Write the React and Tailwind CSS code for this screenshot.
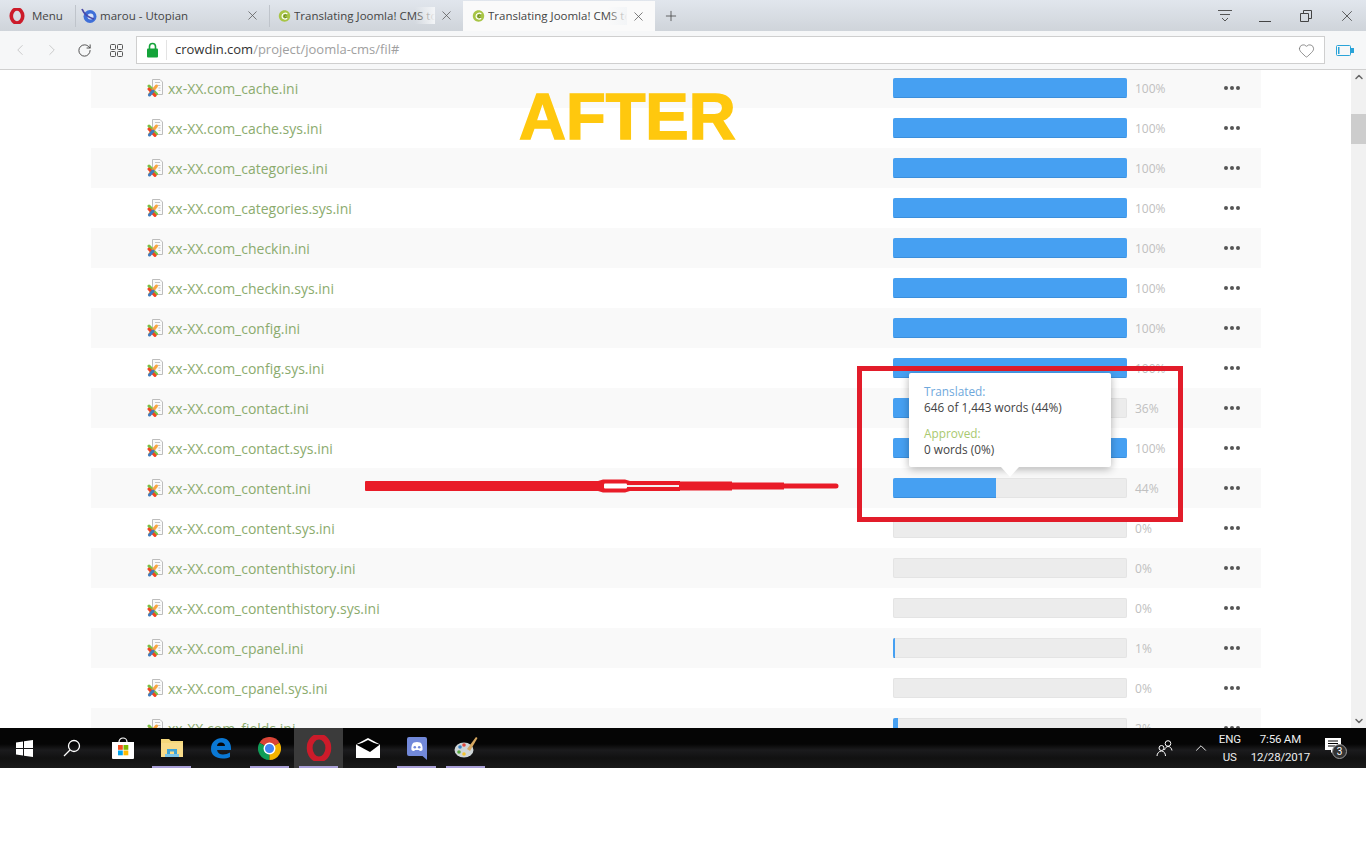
import React from 'react';
import { ChevronDown, ChevronLeft, ChevronRight, ChevronUp, Heart, Plus, RotateCw, X } from 'lucide-react';

const files = [
  ['xx-XX.com_cache.ini', 100],
  ['xx-XX.com_cache.sys.ini', 100],
  ['xx-XX.com_categories.ini', 100],
  ['xx-XX.com_categories.sys.ini', 100],
  ['xx-XX.com_checkin.ini', 100],
  ['xx-XX.com_checkin.sys.ini', 100],
  ['xx-XX.com_config.ini', 100],
  ['xx-XX.com_config.sys.ini', 100],
  ['xx-XX.com_contact.ini', 36],
  ['xx-XX.com_contact.sys.ini', 100],
  ['xx-XX.com_content.ini', 44],
  ['xx-XX.com_content.sys.ini', 0],
  ['xx-XX.com_contenthistory.ini', 0],
  ['xx-XX.com_contenthistory.sys.ini', 0],
  ['xx-XX.com_cpanel.ini', 1],
  ['xx-XX.com_cpanel.sys.ini', 0],
  ['xx-XX.com_fields.ini', 2],
];

function OperaLogo({ size = 16 }) {
  return (
    <svg width={size} height={size} viewBox="0 0 24 24">
      <ellipse cx="12" cy="12" rx="8.6" ry="10.5" fill="none" stroke="#cc1b2a" strokeWidth="5.4" />
    </svg>
  );
}

function CrowdinLogo() {
  return (
    <svg width="13" height="14" viewBox="0 0 16 16" className="shrink-0">
      <path d="M8 1c4 0 7 3 7 7s-3 7-7 7-7-3-7-7 3-7 7-7z" fill="#a8c545" />
      <path d="M11.5 5.5C9 3.5 5 5 5 8.2s3.6 4.6 6.3 2.6" fill="none" stroke="#fff" strokeWidth="1.5" />
      <path d="M10.5 7C9 6.2 7.4 7 7.4 8.3s1.800 2 3.100 1.200" fill="none" stroke="#4d6b1d" strokeWidth="1.100" />
    </svg>
  );
}

function JoomlaFile() {
  return (
    <svg width="16" height="18" viewBox="0 0 16 18" className="shrink-0">
      <path d="M5.500 0.500H13L15.500 3V15.500H5.500Z" fill="#fafafa" stroke="#bdbdbd" />
      <path d="M8 3.500h5M11 6.500h2.500M11.500 9h2M11.500 11.500h2" stroke="#c4c4c4" />
      <path d="M2 7L9.500 15" stroke="#7ac143" strokeWidth="3" strokeLinecap="round" />
      <path d="M9.500 7L2.500 15.500" stroke="#f9a541" strokeWidth="3" strokeLinecap="round" />
      <path d="M2 10L8 16.500" stroke="#f44321" strokeWidth="3" strokeLinecap="round" />
      <path d="M6 12L2.500 16" stroke="#3f7cc0" strokeWidth="3" strokeLinecap="round" />
    </svg>
  );
}

function Tab({ icon, title, active, fade, width, padding }) {
  return (
    <div className={`flex h-[30px] items-center pr-[9px] ${padding} ${width} ${active ? 'bg-[#fafafa] self-end' : ''}`}>
      {icon}
      <div className="relative ml-[3px] flex-1 overflow-hidden whitespace-nowrap text-[11.5px] text-[#444]">
        {title}
        {fade && <div className="absolute right-0 top-0 h-full w-5 bg-gradient-to-r from-transparent to-[#f3f5f7]" />}
      </div>
      <X size={15} strokeWidth={1.200} className="ml-1 shrink-0 text-[#555]" />
    </div>
  );
}

function BrowserChrome() {
  return (
    <div className="shrink-0 font-['Open_Sans',sans-serif]">
      <div className="flex h-[31px] items-center bg-gradient-to-b from-[#e1e6ed] to-[#cfd4da]">
        <div className="flex w-[75px] items-center gap-[7px] pl-[9px] text-[11.5px] text-[#444]">
          <OperaLogo />
          Menu
        </div>
        <div className="h-[22px] w-px bg-[#bfc4cb]" />
        <Tab
          width="w-[193px]"
          padding="pl-[5px]"
          icon={
            <svg width="16" height="15" viewBox="0 0 16 15" className="shrink-0">
              <circle cx="9" cy="8.500" r="6.500" fill="#3f6fd8" />
              <circle cx="9.500" cy="8.500" r="3" fill="#d9e4fa" />
              <path d="M1 1c2 5 5 8 12 10" fill="none" stroke="#4a4aa8" strokeWidth="1.800" />
            </svg>
          }
          title="marou - Utopian"
        />
        <div className="h-[22px] w-px bg-[#bfc4cb]" />
        <Tab width="w-[193px]" padding="pl-[8px]" icon={<CrowdinLogo />} title="Translating Joomla! CMS to Arabic" fade />
        <Tab width="w-[192px]" padding="pl-[9px]" icon={<CrowdinLogo />} title="Translating Joomla! CMS to Arabic" fade active />
        <Plus size={16} strokeWidth={1.200} className="ml-2 text-[#444]" />
        <div className="ml-auto flex items-center text-[#555]">
          <svg width="16" height="14" viewBox="0 0 16 14" className="mr-[25px]" fill="none" stroke="#555">
            <path d="M1 1.500h14M3 5.500h10M5 9l3 3 3-3" />
          </svg>
          <svg width="14" height="14" viewBox="0 0 14 14" className="mr-[27px]" fill="none" stroke="#444">
            <path d="M1 12.500h12" />
          </svg>
          <svg width="14" height="14" viewBox="0 0 14 14" className="mr-[25px]" fill="none" stroke="#444">
            <path d="M1.500 4.500h8v8h-8zM4.500 4.500v-3h8v8h-3" />
          </svg>
          <X size={18} strokeWidth={1} className="mr-[10px] text-[#333]" />
        </div>
      </div>
      <div className="flex h-[39px] items-center border-b border-[#d0d0d0] bg-[#f6f7f8]">
        <ChevronLeft size={18} strokeWidth={1} className="ml-[11px] text-[#bbb]" />
        <ChevronRight size={18} strokeWidth={1} className="ml-[14px] text-[#bbb]" />
        <RotateCw size={15} strokeWidth={1.500} className="ml-[16px] text-[#444]" />
        <svg width="13" height="13" viewBox="0 0 13 13" className="ml-[18px]" fill="none" stroke="#555">
          <rect x="0.500" y="0.500" width="5" height="5" rx="1" />
          <rect x="7.500" y="0.500" width="5" height="5" rx="1" />
          <rect x="0.500" y="7.500" width="5" height="5" rx="1" />
          <rect x="7.500" y="7.500" width="5" height="5" rx="1" />
        </svg>
        <div className="ml-[13px] flex h-[28px] flex-1 items-center border border-[#cfcfcf] bg-white">
          <svg width="13" height="16" viewBox="0 0 13 16" className="ml-[9px]">
            <path d="M3.500 7V4.500a3 3 0 0 1 6 0V7" fill="none" stroke="#14a33a" strokeWidth="1.600" />
            <rect x="1" y="6.500" width="11" height="9" rx="1" fill="#14a33a" />
          </svg>
          <div className="ml-[7px] h-[20px] w-px bg-[#e3e3e3]" />
          <div className="ml-[8px] text-[13px] text-[#333]">
            crowdin.com<span className="text-[#a0a0a0]">/project/joomla-cms/fil#</span>
          </div>
          <Heart size={17} strokeWidth={1} className="ml-auto mr-[9px] text-[#666]" />
        </div>
        <svg width="18" height="11" viewBox="0 0 18 11" className="ml-[11px] mr-[12px]" fill="none">
          <rect x="0.500" y="0.500" width="14" height="10" rx="1" stroke="#2aa3d8" />
          <rect x="2" y="2" width="1.500" height="7" fill="#2aa3d8" />
          <rect x="15" y="3" width="3" height="5" fill="#2aa3d8" />
        </svg>
      </div>
    </div>
  );
}

function FileRow({ name, percent, shaded }) {
  return (
    <div className={`flex h-10 items-center ${shaded ? 'bg-[#f9f9f9]' : 'bg-white'}`}>
      <div className="ml-[56px] w-[746px] flex items-center gap-[5px] text-[14px] text-[#8bab6e]">
        <JoomlaFile />
        {name}
      </div>
      <div className="h-5 w-[234px] overflow-hidden rounded-[2px] bg-[#ececec] shadow-[inset_0_0_0_1px_#e4e4e4]">
        <div className="h-5 bg-[#46a0f2] shadow-[inset_0_-1px_0_#3c8fdc]" style={{ width: `${percent}%` }} />
      </div>
      <div className="ml-2 w-[88px] translate-y-px text-[12px] text-[#c0c0c0]">{percent}%</div>
      <div className="ml-px flex gap-[2px]">
        <span className="size-[4px] rounded-full bg-[#555]" />
        <span className="size-[4px] rounded-full bg-[#555]" />
        <span className="size-[4px] rounded-full bg-[#555]" />
      </div>
    </div>
  );
}

function Tooltip() {
  return (
    <div className="absolute left-[909px] top-[303px] h-[94px] w-[202px] rounded-[2px] bg-white px-[15px] pt-[10px] text-[11.8px] leading-[16px] text-[#444] shadow-[0_2px_8px_rgba(0,0,0,0.3)]">
      <div className="text-[#6fa8dc]">Translated:</div>
      <div>646 of 1,443 words (44%)</div>
      <div className="mt-[10px] text-[#a9c96f]">Approved:</div>
      <div>0 words (0%)</div>
      <div className="absolute left-[92px] top-[94px] h-0 w-0 border-x-[9px] border-t-[10px] border-x-transparent border-t-white" />
    </div>
  );
}

function RedMarks() {
  return (
    <>
      <div className="absolute left-[857px] top-[296px] h-[156px] w-[326px] border-[5px] border-[#e21c2a]" />
      <svg width="480" height="20" viewBox="0 0 480 20" className="absolute left-[362px] top-[406px]">
        <path d="M4 5H236L241 3.500H263L268 5H318V15H268L263 16.500H241L236 15H4a1 1 0 0 1-1-1V6a1 1 0 0 1 1-1z" fill="#e91c28" />
        <path d="M318 5.500H370V14.500H318zM370 6.500H422V13.500H370zM422 7.500H474a2.500 2.500 0 0 1 0 5H422z" fill="#e91c28" />
        <rect x="242" y="7.500" width="23" height="5" rx="1" fill="#fff" />
        <rect x="265" y="9" width="52" height="2" fill="#f2f2f2" />
      </svg>
    </>
  );
}

function Page() {
  return (
    <div className="relative flex min-h-0 flex-1 overflow-hidden bg-white font-['Open_Sans',sans-serif]">
      <div className="-mt-[2px] ml-[91px] w-[1170px]">
        {files.map(([name, percent], i) => (
          <FileRow key={name} name={name} percent={percent} shaded={i % 2 === 0} />
        ))}
      </div>
      <div className="absolute left-[519px] top-[5px] font-['Liberation_Sans',sans-serif] text-[65px] font-bold leading-[84px] text-[#ffc80e] [-webkit-text-stroke:1.5px_#ffc80e]">
        AFTER
      </div>
      <RedMarks />
      <Tooltip />
      <div className="ml-auto flex w-[15px] flex-col items-center justify-between bg-[#f1f1f1] py-[1px]">
        <ChevronUp size={12} strokeWidth={3} className="text-[#666]" />
        <ChevronDown size={12} strokeWidth={3} className="text-[#666]" />
      </div>
      <div className="absolute right-0 top-[44px] h-[30px] w-[15px] bg-[#cdcdcd]" />
    </div>
  );
}

function TaskIcon({ children, running, active }) {
  return (
    <div className={`relative flex h-10 w-[49px] items-center justify-center ${active ? 'bg-[#3b3b3b]' : ''}`}>
      {children}
      {running && <div className="absolute inset-x-[5px] bottom-0 h-[2px] bg-[#a9a0d8]" />}
    </div>
  );
}

function Taskbar() {
  return (
    <div className="flex h-10 shrink-0 items-center bg-[linear-gradient(#050505_0%,#050505_40%,#1b1b1d_55%,#111_75%,#1a1a1a_100%)] font-['Roboto',sans-serif] text-[11.5px] tracking-[-0.2px] text-[#eee]">
      <div className="flex w-[49px] justify-center">
        <svg width="17" height="17" viewBox="0 0 17 17" fill="#fff">
          <path d="M0 2.400L7 1.400V8H0zM8 1.300L17 0V8H8zM0 9H7V15.600L0 14.600zM8 9H17V17L8 15.700z" />
        </svg>
      </div>
      <div className="flex w-[49px] justify-center">
        <svg width="18" height="18" viewBox="0 0 18 18" fill="none" stroke="#fff" strokeWidth="1.300" className="-translate-x-[2px]">
          <circle cx="11" cy="7" r="5.500" />
          <path d="M7 11L1 17" />
        </svg>
      </div>
      <TaskIcon>
        <svg width="24" height="24" viewBox="0 0 24 24">
          <path d="M8 6a4 4 0 0 1 8 0" fill="none" stroke="#fff" strokeWidth="1.200" />
          <path d="M1 6H23V22a1 1 0 0 1-1 1H2a1 1 0 0 1-1-1z" fill="#fff" />
          <rect x="7" y="9" width="4.800" height="4.800" fill="#f25022" />
          <rect x="12.500" y="9" width="4.800" height="4.800" fill="#7fba00" />
          <rect x="7" y="14.500" width="4.800" height="4.800" fill="#00a4ef" />
          <rect x="12.500" y="14.500" width="4.800" height="4.800" fill="#ffb900" />
        </svg>
      </TaskIcon>
      <TaskIcon running>
        <svg width="22" height="20" viewBox="0 0 22 20">
          <path d="M0 1H8L10 3H22V19H0z" fill="#f4d77a" />
          <rect x="0" y="5" width="22" height="14" fill="#f8dc8a" />
          <path d="M6 16V11H16V16H13V13.500H9V16z" fill="#3da4d8" />
          <rect x="4" y="16" width="14" height="3" fill="#7cc4e6" />
        </svg>
      </TaskIcon>
      <TaskIcon>
        <svg width="22" height="22" viewBox="0 0 22 22">
          <path d="M1 12C1 5 6 1 12 1c5 0 9 4 9 10v2H7c.5 3 3 4.500 6 4.500 2.500 0 5-.8 7-2v4.500c-2 1-4.500 1.500-7.500 1.500C6 21.500 1 18 1 12zM7 9h8c0-2-1.500-3.500-4-3.500S7.300 7 7 9z" fill="#0a78d4" />
        </svg>
      </TaskIcon>
      <TaskIcon running>
        <svg width="23" height="23" viewBox="0 0 24 24">
          <path d="M12 12L22.400 6A12 12 0 0 0 1.600 6z" fill="#db4437" />
          <path d="M12 12L1.600 6A12 12 0 0 0 12 24z" fill="#0f9d58" />
          <path d="M12 12L12 24A12 12 0 0 0 22.400 6z" fill="#f4b400" />
          <circle cx="12" cy="12" r="5.500" fill="#4285f4" stroke="#fff" strokeWidth="1.500" />
        </svg>
      </TaskIcon>
      <TaskIcon running active>
        <OperaLogo size={26} />
      </TaskIcon>
      <TaskIcon>
        <svg width="24" height="20" viewBox="0 0 24 20">
          <path d="M0 6.500L12 0L24 6.500V20H0z" fill="#fff" />
          <path d="M0 6.500L14 14L24 6.500L12 4z" fill="#000" />
          <path d="M4 6L12 2L20 6L14 10z" fill="#000" />
        </svg>
      </TaskIcon>
      <TaskIcon running>
        <svg width="20" height="23" viewBox="0 0 20 23">
          <path d="M2 0H18a2 2 0 0 1 2 2V23L15.500 19H2a2 2 0 0 1-2-2V2a2 2 0 0 1 2-2z" fill="#7289da" />
          <path d="M4.500 13C4 9 5.500 6 7 5.500c2-.7 4-.7 6 0C14.500 6 16 9 15.500 13c-1 1-2 1-3 .8L12 13H8l-.5.800c-1 .2-2 .2-3-.8z" fill="#fff" />
          <circle cx="7.800" cy="10.200" r="1.300" fill="#7289da" />
          <circle cx="12.200" cy="10.200" r="1.300" fill="#7289da" />
        </svg>
      </TaskIcon>
      <TaskIcon running>
        <svg width="24" height="24" viewBox="0 0 24 24">
          <ellipse cx="10" cy="14" rx="9.500" ry="7.500" fill="#cfd6d8" />
          <circle cx="6" cy="11" r="1.800" fill="#3b82c4" />
          <circle cx="10" cy="9" r="1.800" fill="#e2483d" />
          <circle cx="5" cy="16" r="1.800" fill="#58a83f" />
          <circle cx="10" cy="18" r="1.800" fill="#f2c230" />
          <path d="M13 13L22 1L23.500 2L16 15z" fill="#d6a760" />
        </svg>
      </TaskIcon>
      <div className="ml-auto flex items-center">
        <svg width="18" height="18" viewBox="0 0 18 18" fill="none" stroke="#fff" className="mr-[18px]">
          <circle cx="12" cy="4.500" r="2.800" />
          <path d="M8.500 11c.5-2 2-3.500 3.500-3.500 2 0 3.500 1.500 4 4" />
          <circle cx="5.500" cy="9" r="2.500" />
          <path d="M1 17c0-2.500 2-5 4.500-5s4 2.500 4 5" />
        </svg>
        <ChevronUp size={18} strokeWidth={1.200} className="mr-[9px] text-white" />
        <div className="mr-[10px] text-center leading-[18px]">
          <div>ENG</div>
          <div>US</div>
        </div>
        <div className="mr-[15px] text-center leading-[18px]">
          <div>7:56 AM</div>
          <div>12/28/2017</div>
        </div>
        <div className="relative mr-[21px] h-5 w-5">
          <svg width="16" height="16" viewBox="0 0 16 16" className="absolute left-0 top-0">
            <path d="M0 0H16V12H9L6 15V12H0z" fill="#fff" />
            <path d="M3 3H13M3 5.500H13M3 8H10" stroke="#000" />
          </svg>
          <div className="absolute left-[7px] top-[6px] flex size-[15px] items-center justify-center rounded-full border border-[#999] bg-[#333] text-[10px] text-white">
            3
          </div>
        </div>
      </div>
    </div>
  );
}

export default function App() {
  return (
    <div className="flex h-[862px] w-[1366px] flex-col overflow-hidden bg-white">
      <BrowserChrome />
      <Page />
      <Taskbar />
      <div className="h-[94px] shrink-0 bg-white" />
    </div>
  );
}
